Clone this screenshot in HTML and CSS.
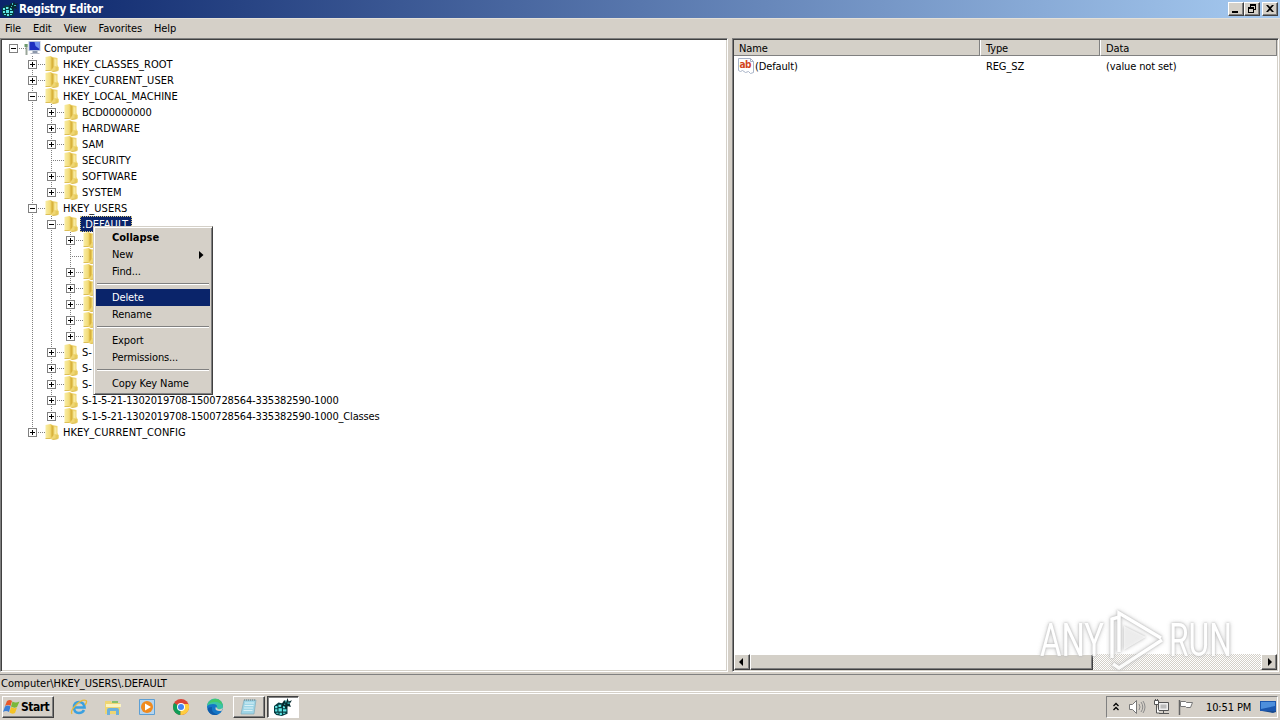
FILE: index.html
```html
<!DOCTYPE html>
<html lang="en">
<head>
    <meta charset="UTF-8">
    <meta name="viewport" content="width=device-width, initial-scale=1.0">
    <title>Registry Editor</title>
    <link rel="stylesheet" href="styles.css">
</head>
<body>
    <!-- Shared icons -->
    <svg class="defs" width="0" height="0">
        <linearGradient id="gold" x1="0" x2="1" y1="0" y2="0">
            <stop offset="0" stop-color="#f9eea6"/>
            <stop offset="0.6" stop-color="#f3dd7c"/>
            <stop offset="1" stop-color="#e2bf45"/>
        </linearGradient>
        <symbol id="folder" viewBox="0 0 16 16">
            <path d="M2 1l5-1 2 1v13l-2 1H3l-1-1z" fill="url(#gold)"/>
            <path d="M9 1l5 1v7l1 2v4l-5 1-3-1 2-4z" fill="#efd673"/>
            <path d="M8 1l2 1v9l-2 3z" fill="#d8b23c"/>
            <path d="M11 3l2 .5V10h-2z" fill="#f8eaa0"/>
            <path d="M12 11h3v3h-3z" fill="#e6ca5c"/>
            <path d="M2 14.500h5M9 15.500l5-1" stroke="#dcbf58" fill="none"/>
        </symbol>
        <symbol id="computer" viewBox="0 0 16 16">
            <path d="M4 1h12v10H4z" fill="#b9c6dc"/>
            <path d="M5 2h10v8H5z" fill="#1c2fc0"/>
            <path d="M10 2h5v7l-4-3z" fill="#6f92ee"/>
            <path d="M8 11h5v2H8z" fill="#8c98ab"/>
            <path d="M6 13h9v1H6z" fill="#b5bbc7"/>
            <path d="M1 4h2v11H1z" fill="#9aa69a"/>
            <path d="M0 4h3v3H0z" fill="#6d9a6d"/>
        </symbol>
        <symbol id="regedit" viewBox="0 0 16 16">
            <path d="M0 7l4-3 5 1 3 2v7l-5 2-5-1-2-2z" fill="#063d42"/>
            <path d="M1 7h2v2H1zM4 6h3v2H4zM8 7h2v2H8zM1 10h2v2H1zM4 9h3v3H4zM8 10h3v2H8zM2 13h2v1H2zM5 13h2v2H5zM8 13h2v1H8z" fill="#5fe6e4"/>
            <path d="M7 5l2-3 2 1 1-3 1 3 3-1-2 3 1 3-3-1-1 3-2-3-3 1z" fill="#062b30"/>
            <path d="M10 2h1v2h-1zM12 4h2v1h-2zM9 5h1v1H9z" fill="#3fc0c0"/>
        </symbol>
    </svg>

    <div class="titlebar">
        <svg class="title-icon"><use href="#regedit"/></svg>
        <span class="title">Registry Editor</span>
        <div class="controls">
            <button><svg viewBox="0 0 14 12"><path d="M3 8h6v2H3z"/></svg></button>
            <button><svg viewBox="0 0 14 12"><path d="M5 1h6v6H9V6h1V3H6v1H5zM3 4h6v6H3zM4 6v3h4V6z" fill-rule="evenodd"/></svg></button>
            <button class="close"><svg viewBox="0 0 14 12"><path d="M3 2h2l2 2 2-2h2L8 5.500l3 3.500H9L7 7 5 9H3l3-3.500z"/></svg></button>
        </div>
    </div>

    <div class="menubar">
        <span>File</span>
        <span>Edit</span>
        <span>View</span>
        <span>Favorites</span>
        <span>Help</span>
    </div>

    <div class="main">
        <div class="pane tree-pane">
            <ul class="tree" id="tree"></ul>
        </div>

        <div class="pane list-pane">
            <div class="list-header">
                <div>Name</div>
                <div>Type</div>
                <div>Data</div>
            </div>
            <div class="list-row">
                <div class="value-name">
                    <svg viewBox="0 0 16 16" width="16" height="16">
                        <path d="M.5.500h12l3 3v11l-3 1-2-2-3 1-3-2-2 1-2-1z" fill="#fff" stroke="#a9b4c8"/>
                        <path d="M12.500.500v3h3" fill="none" stroke="#a9b4c8"/>
                        <text x="1.500" y="10" class="ab">ab</text>
                    </svg>
                    <span>(Default)</span>
                </div>
                <div>REG_SZ</div>
                <div>(value not set)</div>
            </div>
            <div class="scrollbar">
                <div class="scroll-btn"><svg viewBox="0 0 12 12"><path d="M7 2v8L3 6z"/></svg></div>
                <div class="thumb"></div>
                <div class="track"></div>
                <div class="scroll-btn"><svg viewBox="0 0 12 12"><path d="M5 2v8l4-4z"/></svg></div>
            </div>
        </div>
    </div>

    <div class="statusbar"><span>Computer\HKEY_USERS\.DEFAULT</span></div>

    <div class="taskbar">
        <div class="start">
            <svg viewBox="0 0 18 16" width="18" height="16">
                <path d="M4 2q3-2 5 0L7.500 7q-2-2-5.500 0z" fill="#e8582a"/>
                <path d="M9.500 2.500q3 2 7 0L14 8q-3 1.500-6-.5z" fill="#7ab83a"/>
                <path d="M2 7.500q3-2 5.500 0L6 13q-3-2-6 0z" fill="#3b7fd6"/>
                <path d="M8 8q3 2 6 .5L12 14q-3 1.500-5.500-.5z" fill="#f4c326"/>
            </svg>
            <b>Start</b>
        </div>
        <div class="quick">
            <svg viewBox="0 0 18 18">
                <path d="M14 12q-1.500 3-5 3-5 0-5-5.500T9 4q5 0 5.500 5.500H5" fill="none" stroke="#3aa0e0" stroke-width="2.600"/>
                <path d="M2 16Q0 13 6 7t10-4.500Q17.500 4 15 7" fill="none" stroke="#e8b93a" stroke-width="1.300"/>
            </svg>
            <svg viewBox="0 0 18 18">
                <path d="M1 3h6l1 2h8v11H1z" fill="#eed572"/>
                <path d="M2 6h15v3H2z" fill="#fbf3c0"/>
                <path d="M8 3h6v2H8z" fill="#86c06b"/>
                <path d="M3 17v-5q0-2 2-2h8q2 0 2 2v5h-3v-4H6v4z" fill="#6cb0dc"/>
            </svg>
            <svg viewBox="0 0 18 18">
                <path d="M1.500 1.500h15v15h-15z" fill="#b5d4ee" stroke="#5d9fd4"/>
                <circle cx="9" cy="9" r="6" fill="#f08a1e"/>
                <path d="M7 5.500v7L13 9z" fill="#fff"/>
            </svg>
            <svg viewBox="0 0 18 18">
                <circle cx="9" cy="9" r="8" fill="#db4437"/>
                <path d="M9 9L2.100 5A8 8 0 0 0 8.500 17z" fill="#0f9d58"/>
                <path d="M9 9h-.5v8A8 8 0 0 0 16.500 6H9z" fill="#ffcd40"/>
                <circle cx="9" cy="9" r="4" fill="#fff"/>
                <circle cx="9" cy="9" r="3" fill="#4285f4"/>
            </svg>
            <svg viewBox="0 0 18 18">
                <circle cx="9" cy="9" r="8" fill="#1476c6"/>
                <path d="M1 8a8 8 0 0 1 16 1q0 4-5 3-2-.5-1-2 1-4-4-4-4 0-6 2z" fill="#3bc2a8"/>
                <path d="M1.500 7Q4 1 10 1.100T17 9q-2-5-8-5-5 0-7.500 3z" fill="#42c86a"/>
                <path d="M10 8.500q-2 4 3 4.500 2 0 3-.5l1-3q-2 2.500-5 1.500-1.500-.8-2-2.500z" fill="#d4d0c8"/>
                <path d="M6 9q-1 6 6 7.500-7 2-10-4Q1 9 6 9z" fill="#0f5aa8"/>
            </svg>
        </div>
        <div class="task">
            <svg viewBox="0 0 18 18">
                <path d="M4 2h12l-2 14H1z" fill="#9fd5e6" stroke="#7aa5b5" stroke-width=".6"/>
                <path d="M5 5h9M4.500 7.500h9M4 10h9M3.500 12.500h9" stroke="#d9f1f7" fill="none"/>
                <path d="M4 2h12" stroke="#6b7f86" stroke-dasharray="1 1"/>
            </svg>
        </div>
        <div class="task active"><svg><use href="#regedit"/></svg></div>
        <div class="tray">
            <svg class="chevron" viewBox="0 0 8 12"><path d="M1.500 5L4 2.500 6.500 5M1.500 9L4 6.500 6.500 9" fill="none" stroke="#000" stroke-width="1.300"/></svg>
            <svg class="speaker" viewBox="0 0 18 16">
                <path d="M1.500 5.500h3l4-4v13l-4-4h-3z" fill="#fff" stroke="#777"/>
                <path d="M11 5q2 3 0 6M13 3q3.500 5 0 10M15 2q4 6 0 12" fill="none" stroke="#8b8b8b"/>
            </svg>
            <svg class="network" viewBox="0 0 18 16">
                <path d="M5.500 3.500h10v8h-10z" fill="#eee" stroke="#555"/>
                <path d="M7.500 5.500h6v4h-6z" fill="#bbb"/>
                <path d="M6 14.500h10M10.500 12v2" stroke="#555"/>
                <path d="M1.500 1.500h4v4h-4zM3.500 6v8h3M2.500 0v2M4.500 0v2" fill="#fff" stroke="#555"/>
            </svg>
            <svg class="flag" viewBox="0 0 18 16">
                <path d="M2.500 1v15" stroke="#666" stroke-width="1.500"/>
                <path d="M3.500 2.500h5l1 1h6l-2 5h-4l-1-1h-5z" fill="#fff" stroke="#777"/>
            </svg>
            <span class="clock">10:51 PM</span>
            <svg class="desktop" viewBox="0 0 16 14">
                <path d="M0 1h16v10H0z" fill="#1b57ae"/>
                <path d="M1 2h14v4L1 9z" fill="#4d8fdc"/>
                <path d="M2 11l11 2 3-1v-1z" fill="#174a8f"/>
            </svg>
        </div>
    </div>

    <!-- Key context menu -->
    <div class="context-menu">
        <div class="item bold">Collapse</div>
        <div class="item">New<svg viewBox="0 0 5 8"><path d="M0 0l4.500 4L0 8z"/></svg></div>
        <div class="item">Find...</div>
        <hr>
        <div class="item hover">Delete</div>
        <div class="item">Rename</div>
        <hr>
        <div class="item">Export</div>
        <div class="item">Permissions...</div>
        <hr>
        <div class="item">Copy Key Name</div>
    </div>

    <svg class="watermark" viewBox="0 0 240 74">
        <text x="4" y="50" textLength="64" lengthAdjust="spacingAndGlyphs">ANY</text>
        <path d="M76 52V13l7-2M83 46V7l42 25M126 34L83 62l-6-4" class="mark"/>
        <path d="M88 20v24l22-13z" class="play"/>
        <text x="133" y="50" textLength="63" lengthAdjust="spacingAndGlyphs">RUN</text>
    </svg>

    <script>
        // open: true = expanded, false = collapsed, null = no subkeys
        const keys = [
            { name: 'Computer', icon: 'computer', open: true, children: [
                { name: 'HKEY_CLASSES_ROOT', open: false },
                { name: 'HKEY_CURRENT_USER', open: false },
                { name: 'HKEY_LOCAL_MACHINE', open: true, children: [
                    { name: 'BCD00000000', open: false },
                    { name: 'HARDWARE', open: false },
                    { name: 'SAM', open: false },
                    { name: 'SECURITY', open: null },
                    { name: 'SOFTWARE', open: false },
                    { name: 'SYSTEM', open: false }
                ] },
                { name: 'HKEY_USERS', open: true, children: [
                    { name: '.DEFAULT', open: true, selected: true, children: [
                        { name: '', open: false },
                        { name: '', open: null },
                        { name: '', open: false },
                        { name: '', open: false },
                        { name: '', open: false },
                        { name: '', open: false },
                        { name: '', open: false }
                    ] },
                    { name: 'S-', open: false },
                    { name: 'S-', open: false },
                    { name: 'S-', open: false },
                    { name: 'S-1-5-21-1302019708-1500728564-335382590-1000', open: false },
                    { name: 'S-1-5-21-1302019708-1500728564-335382590-1000_Classes', open: false }
                ] },
                { name: 'HKEY_CURRENT_CONFIG', open: false }
            ] }
        ];

        function renderKey(key) {
            const state = key.open === null ? 'leaf' : (key.open ? 'box' : 'box plus');
            const tight = /\d|Comp/.test(key.name) ? ' tight' : '';
            const children = key.children ? `<ul>${key.children.map(renderKey).join('')}</ul>` : '';
            return `
                <li>
                    <div class="key">
                        <span class="${state}"></span>
                        <svg class="key-icon"><use href="#${key.icon || 'folder'}"/></svg>
                        <span class="key-name${tight}${key.selected ? ' selected' : ''}">${key.name}</span>
                    </div>
                    ${children}
                </li>`;
        }

        document.getElementById('tree').innerHTML = keys.map(renderKey).join('');
    </script>
</body>
</html>
```
FILE: styles.css
```css
* {
    box-sizing: border-box;
}

body {
    margin: 0;
    width: 1280px;
    height: 720px;
    overflow: hidden;
    display: flex;
    flex-direction: column;
    background-color: #d5d0c8;
    color: #000;
    font-family: "DejaVu Sans Condensed", "DejaVu Sans", sans-serif;
    font-stretch: condensed;
    font-size: 11px;
    letter-spacing: -0.13px;
    line-height: 16px;
    white-space: nowrap;
}

svg {
    display: block;
    flex: none;
}

.defs {
    position: absolute;
}

/* Title bar */
.titlebar {
    height: 18px;
    display: flex;
    align-items: center;
    padding: 0 2px;
    background: linear-gradient(to right, #0a246a, #a6caf0);
}

.title-icon {
    width: 16px;
    height: 16px;
}

.title {
    margin-left: 1px;
    color: #fff;
    font-size: 11.5px;
    font-weight: bold;
    letter-spacing: -0.25px;
}

.controls {
    display: flex;
    margin-left: auto;
}

.controls button {
    width: 16px;
    height: 14px;
    padding: 0;
    border: 1px solid;
    border-color: #fff #404040 #404040 #fff;
    background-color: #d4d0c8;
    box-shadow: inset -1px -1px #808080;
}

.controls .close {
    margin-left: 2px;
}

/* Menu bar */
.menubar {
    height: 20px;
    display: flex;
    gap: 12px;
    padding: 2px 5px 0;
    border-top: 1px solid #e4e0d8;
}

/* Panes */
.main {
    height: 634px;
    display: grid;
    grid-template-columns: 728px 547px;
    gap: 4px;
}

.pane {
    background-color: #fff;
    border: 1px solid;
    border-color: #808080 #fff #fff #808080;
    box-shadow: inset 1px 1px #404040, inset -1px -1px #d4d0c8;
    padding: 1px;
}

.tree, .tree ul {
    list-style: none;
    margin: 0;
    padding: 0;
}

.tree {
    padding-left: 6px;
}

.tree ul {
    padding-left: 19px;
}

/* dotted guide through the expand boxes, cut at the last child */
.tree ul > li {
    background: repeating-linear-gradient(to bottom, #808080 0 1px, transparent 1px 2px) 5px 0 / 1px 100% no-repeat;
}

.tree ul > li:last-child {
    background-size: 1px 8px;
}

.key {
    height: 16px;
    display: flex;
    align-items: center;
    background: repeating-linear-gradient(to right, #808080 0 1px, transparent 1px 2px) 5px 8px / 13px 1px no-repeat;
}

.leaf, .box {
    flex: none;
    width: 9px;
    height: 9px;
    margin: 1px 6px 0 1px;
}

.box {
    border: 1px solid #808080;
    background: linear-gradient(#000, #000) center / 5px 1px no-repeat #fff;
}

.box.plus {
    background: linear-gradient(#000, #000) center / 5px 1px no-repeat, linear-gradient(#000, #000) center / 1px 5px no-repeat, #fff;
}

.key-icon {
    width: 17px;
    height: 16px;
}

.key-name {
    height: 16px;
    padding: 1px 2px 0;
    margin-left: 1px;
    letter-spacing: 0.03px;
}

.key-name.tight {
    letter-spacing: -0.17px;
}

.key-name.selected {
    background-color: #0a246a;
    color: #fff;
    outline: 1px dotted #d8c880;
    outline-offset: -1px;
    padding-right: 4px;
}

/* Value list */
.list-pane {
    display: flex;
    flex-direction: column;
}

.list-header, .list-row {
    display: grid;
    grid-template-columns: 246px 120px 1fr;
    height: 16px;
}

.list-header div {
    height: 16px;
    padding: 1px 5px 0;
    background-color: #d4d0c8;
    border-right: 1px solid #808080;
    border-bottom: 1px solid #808080;
}

.list-header div + div {
    border-left: 1px solid #fff;
}

.list-row {
    margin-top: 2px;
}

.list-row > div {
    padding-left: 6px;
}

.list-row > div, .list-row span {
    padding-top: 1px;
}

.list-row .value-name {
    display: flex;
    padding: 0 0 0 4px;
    gap: 1px;
}

.ab {
    font: bold 10px "DejaVu Sans Condensed", "DejaVu Sans", sans-serif;
    letter-spacing: -0.5px;
    fill: #d2451e;
}

.scrollbar {
    display: flex;
    height: 16px;
    margin-top: auto;
}

.scroll-btn, .thumb {
    border: 1px solid;
    border-color: #fff #404040 #404040 #fff;
    background-color: #d4d0c8;
    box-shadow: inset -1px -1px #808080;
}

.scroll-btn {
    width: 16px;
    padding: 1px;
}

.thumb {
    width: 343px;
}

.track {
    flex: 1;
    background: repeating-conic-gradient(#fff 0 25%, #d4d0c8 0 50%) 0 0 / 2px 2px;
}

/* Status bar */
.statusbar {
    height: 18px;
    margin-top: 2px;
    padding: 1px 1px 0;
    line-height: 15px;
    border-top: 1px solid #808080;
    border-bottom: 1px solid #fff;
    letter-spacing: 0;
}

/* Taskbar */
.taskbar {
    flex: 1;
    display: flex;
    align-items: flex-start;
    margin-top: 1px;
    padding: 2px 2px 0;
    border-top: 1px solid #fff;
}

.start, .task {
    height: 22px;
    display: flex;
    align-items: center;
    border: 1px solid;
    border-color: #fff #404040 #404040 #fff;
    box-shadow: inset -1px -1px #808080;
}

.start {
    width: 52px;
    font-size: 12px;
    letter-spacing: -0.5px;
}

.quick {
    display: flex;
    gap: 16px;
    height: 22px;
    align-items: center;
    margin: 0 9px 0 16px;
}

.quick svg, .task svg {
    width: 18px;
    height: 18px;
}

.task {
    width: 32px;
    margin-right: 2px;
    justify-content: center;
}

.task.active {
    background-color: #fff;
    border-color: #404040 #fff #fff #404040;
    box-shadow: inset 1px 1px #808080;
}

.tray {
    width: 172px;
    height: 22px;
    margin-left: auto;
    display: flex;
    align-items: center;
    padding-left: 5px;
    border: 1px solid;
    border-color: #808080 #fff #fff #808080;
}

.chevron {
    width: 8px;
    height: 12px;
}

.speaker, .network, .flag {
    width: 18px;
    height: 16px;
}

.speaker {
    margin-left: 8px;
}

.network {
    margin-left: 7px;
}

.flag {
    margin-left: 6px;
}

.clock {
    margin-left: 11px;
    width: 46px;
    padding-top: 1px;
}

.desktop {
    width: 16px;
    height: 14px;
    margin-left: 8px;
}

/* Context menu */
.context-menu {
    position: absolute;
    left: 93px;
    top: 226px;
    width: 120px;
    padding: 2px;
    background-color: #d5d0c8;
    border: 1px solid;
    border-color: #d4d0c8 #404040 #404040 #d4d0c8;
    box-shadow: inset 1px 1px #fff, inset -1px -1px #808080;
}

.item {
    height: 17px;
    display: flex;
    align-items: center;
    padding: 0 6px 0 16px;
}

.item svg {
    width: 5px;
    height: 8px;
    margin-left: auto;
}

.item.bold {
    font-weight: bold;
    letter-spacing: 0;
}

.item.hover {
    background-color: #0a246a;
    color: #fff;
}

.context-menu hr {
    height: 2px;
    margin: 3px 1px 4px;
    border: 0;
    border-top: 1px solid #808080;
    border-bottom: 1px solid #fff;
}

/* Watermark */
.watermark {
    position: absolute;
    left: 1036px;
    top: 606px;
    width: 240px;
    height: 74px;
    fill: #fff;
    filter: drop-shadow(0 0 1px #aaa) drop-shadow(0 0 2px #ccc);
    opacity: 0.85;
}

.watermark text {
    font: 46px Roboto, sans-serif;
    letter-spacing: 0;
}

.mark {
    fill: none;
    stroke: #fff;
    stroke-width: 3.5;
}

.play {
    fill: #fff;
    fill-opacity: 0.7;
}
```
